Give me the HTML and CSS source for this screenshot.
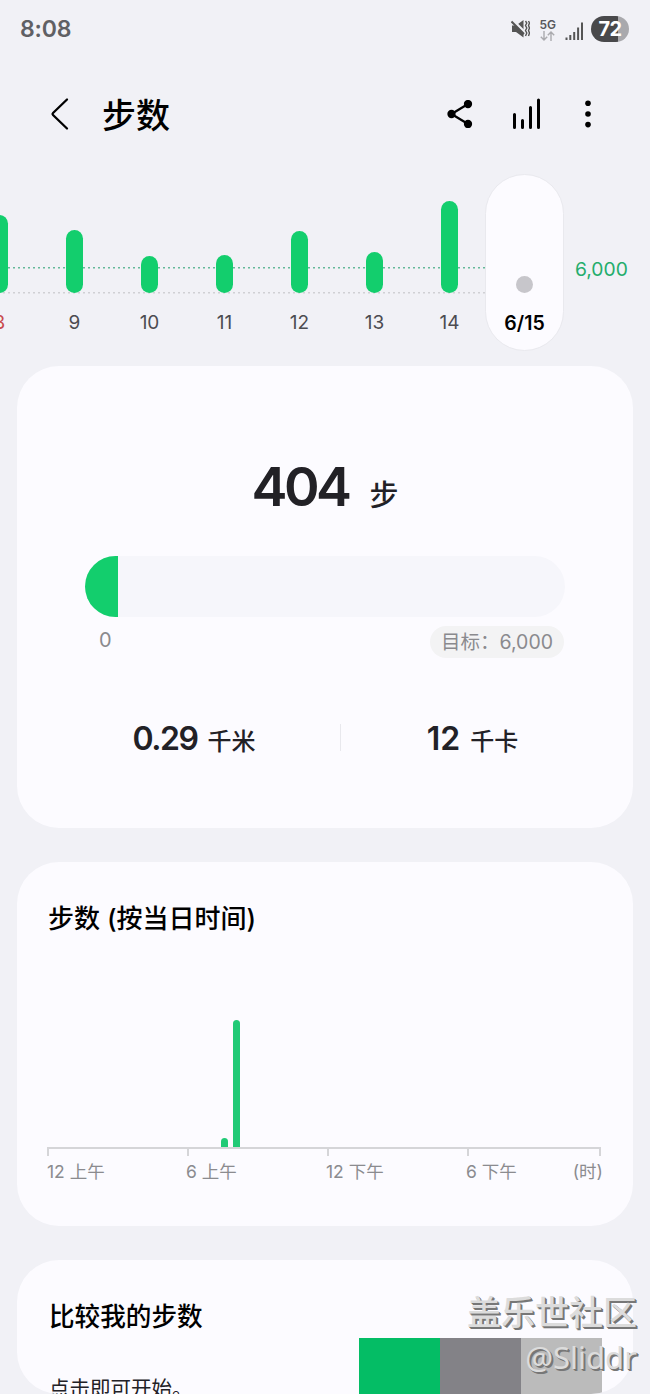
FILE: index.html
```html
<!DOCTYPE html>
<html lang="zh-CN">
<head>
    <meta charset="UTF-8">
    <title>步数</title>
    <link rel="stylesheet" href="styles.css">
</head>
<body>
    <div class="status-bar">
        <span class="clock">8:08</span>
        <div class="status-icons">
            <svg class="mute-icon" width="19" height="18" viewBox="0 0 19 18" fill="none">
                <path d="M1 5.500h4L12.500 0v17.500L5 12H1z" fill="#555"/>
                <path d="M1.500 0L14 12.500" stroke="#f1f1f6" stroke-width="2.600"/>
                <path d="M.5 1.500L13 14" stroke="#555" stroke-width="2"/>
                <path d="M14.500 1l1.300 2-1.300 2.500 1.300 2.500-1.300 2.500 1.300 2.500-1.300 3M17.500 1l1 2-1 2.500 1 2.500-1 2.500 1 2.500-1 3" stroke="#555" stroke-width="1.400"/>
            </svg>
            <div class="network">
                <span>5G</span>
                <svg width="15" height="10" viewBox="0 0 15 10" fill="none" stroke="#aaaaae" stroke-width="1.4">
                    <path d="M4 0v9M.8 5.700L4 9l3.200-3.300M11 10V1M7.800 4.300L11 1l3.200 3.300"/>
                </svg>
            </div>
            <svg class="signal-icon" width="19" height="18" viewBox="0 0 19 18" stroke="#555" stroke-width="2">
                <path d="M1.500 18v-2.500M5.300 18v-5M9.200 18V10M13.100 18V5.500M17 18V0.500"/>
            </svg>
            <div class="battery">72</div>
        </div>
    </div>

    <div class="header">
        <svg class="back" width="20" height="34" viewBox="0 0 20 34" fill="none" stroke="#000" stroke-width="2.3" stroke-linecap="round" stroke-linejoin="round">
            <path d="M17 2.500L3 16Q2 17 3 18L17 31.500"/>
        </svg>
        <h1>步数</h1>
        <svg class="share" width="26" height="28" viewBox="0 0 26 28" stroke="#000" stroke-width="2.300">
            <path d="M21 4L4.500 14L21 24" fill="none"/>
            <circle cx="21" cy="4" r="3"/>
            <circle cx="4.500" cy="14" r="3"/>
            <circle cx="21" cy="24" r="3"/>
        </svg>
        <svg class="trend" width="30" height="32" viewBox="0 0 30 32" stroke="#000" stroke-width="3" stroke-linecap="round">
            <path d="M2.500 16.500V29.500M10.500 22.500v7M18.500 9.500v20M26.500 2v27.500"/>
        </svg>
        <svg class="more" width="8" height="28" viewBox="0 0 8 28">
            <circle cx="4" cy="3.300" r="2.800"/>
            <circle cx="4" cy="14" r="2.800"/>
            <circle cx="4" cy="24.600" r="2.800"/>
        </svg>
    </div>

    <div class="week">
        <div class="days">
            <div class="day sunday"><div class="bar" style="height: 78px"></div><span>8</span></div>
            <div class="day"><div class="bar" style="height: 63px"></div><span>9</span></div>
            <div class="day"><div class="bar" style="height: 37px"></div><span>10</span></div>
            <div class="day"><div class="bar" style="height: 38px"></div><span>11</span></div>
            <div class="day"><div class="bar" style="height: 62px"></div><span>12</span></div>
            <div class="day"><div class="bar" style="height: 41px"></div><span>13</span></div>
            <div class="day"><div class="bar" style="height: 92px"></div><span>14</span></div>
        </div>
        <div class="day today"><div class="bar empty"></div><span>6/15</span></div>
        <div class="goal-label">6,000</div>
    </div>

    <div class="card summary">
        <div class="steps"><span class="count">404</span><span class="unit">步</span></div>
        <div class="progress-bar">
            <div class="progress" style="width: 6.8%"></div>
        </div>
        <div class="progress-labels">
            <span class="zero">0</span>
            <span class="target">目标：<span class="num">6,000</span></span>
        </div>
        <div class="stats">
            <div class="stat"><b>0.29</b><span>千米</span></div>
            <div class="stat"><b>12</b><span>千卡</span></div>
        </div>
    </div>

    <div class="card hourly">
        <h2>步数 (按当日时间)</h2>
        <div class="hour-bars">
            <div class="hour-bar half-past-seven" style="height: 9px"></div>
            <div class="hour-bar eight" style="height: 127px"></div>
        </div>
        <div class="axis"><i></i><i></i><i></i><i></i></div>
        <div class="axis-labels">
            <span>12 上午</span><span>6 上午</span><span>12 下午</span><span>6 下午</span><span>(时)</span>
        </div>
    </div>

    <div class="card compare">
        <div class="compare-text">
            <h2>比较我的步数</h2>
            <p>点击即可开始。</p>
        </div>
        <div class="blocks"><i class="green"></i><i class="dark"></i><i class="light"></i></div>
    </div>

    <div class="watermark">
        <div class="community">盖乐世社区</div>
        <div class="author">@Sliddr</div>
    </div>
</body>
</html>
```
FILE: styles.css
```css
* {
    margin: 0;
    padding: 0;
    box-sizing: border-box;
}

body {
    position: relative;
    width: 650px;
    height: 1394px;
    overflow: hidden;
    font-family: Inter, 'Noto Sans CJK SC', sans-serif;
    background: #f1f1f6;
    color: #222126;
}

svg {
    display: block;
    flex: none;
}

.status-bar {
    display: flex;
    justify-content: space-between;
    align-items: center;
    height: 58px;
    padding: 0 21px 0 20px;
}

.clock {
    font-size: 23px;
    font-weight: 600;
    letter-spacing: -0.2px;
    color: #606064;
}

.status-icons {
    display: flex;
    align-items: center;
}

.network {
    display: flex;
    flex-direction: column;
    align-items: center;
    margin: 1px 9px 0 9px;
    font-size: 12px;
    line-height: 12px;
    font-weight: 600;
    color: #58585c;
}

.signal-icon {
    margin: 3px 7px 0 0;
}

.battery {
    width: 38px;
    height: 26px;
    border-radius: 13px;
    background: linear-gradient(90deg, #49494b 72%, #a9a9ad 72%);
    color: #fff;
    font-size: 20px;
    font-weight: 700;
    letter-spacing: -0.5px;
    line-height: 27px;
    text-align: center;
}

.header {
    display: flex;
    align-items: center;
    height: 111px;
    padding: 0 58px 0 50px;
}

.header h1 {
    margin: 5px auto 0 32px;
    font-size: 34px;
    line-height: 44px;
    font-weight: 500;
    color: #000;
}

.share {
    margin-right: -1px;
}

.trend {
    margin: 0 42px 0 40px;
}

.week {
    display: flex;
    height: 197px;
    padding-top: 5px;
}

.days {
    display: flex;
    width: 485px;
    height: 177px;
    /* goal line and base line */
    background:
        repeating-linear-gradient(90deg, transparent 0 3px, #65b999 3px 5px) 0 93px / 100% 1.5px no-repeat,
        repeating-linear-gradient(90deg, transparent 0 3px, #d0d0d4 3px 5px) 0 118px / 100% 1.5px no-repeat;
}

.day {
    display: flex;
    flex: none;
    flex-direction: column;
    justify-content: flex-end;
    align-items: center;
    width: 75px;
    height: 177px;
    padding-bottom: 16px;
    font-size: 19px;
    line-height: 24px;
    color: #4c4c51;
}

.sunday {
    margin-left: -38px;
    color: #c94b4d;
}

.bar {
    width: 17px;
    margin-bottom: 18px;
    border-radius: 9px;
    background: #13ce6d;
}

.today {
    width: 79px;
    border: 1px solid #e9e9ee;
    border-radius: 40px;
    background: #fcfbff;
    font-size: 19.5px;
    font-weight: 600;
    color: #000;
    padding-bottom: 15px;
}

.empty {
    height: 17px;
    background: #c7c6cb;
}

.goal-label {
    padding: 83px 0 0 11px;
    font-size: 19.3px;
    line-height: 24px;
    color: #24ad6c;
}

.card {
    width: 616px;
    margin: 0 0 34px 17px;
    border-radius: 42px;
    background: #fcfbff;
}

.card h2 {
    font-size: 25.6px;
    line-height: 36px;
    font-weight: 500;
    color: #000;
}

.summary {
    height: 462px;
    padding: 85px 68px 0;
}

.steps {
    display: flex;
    justify-content: center;
    align-items: baseline;
    height: 105px;
    line-height: 72px;
}

.count {
    font-size: 54px;
    font-weight: 600;
    letter-spacing: -3.5px;
}

.unit {
    margin-left: 21px;
    font-size: 29px;
    font-weight: 500;
    line-height: 68px;
}

.progress-bar {
    width: 480px;
    height: 61px;
    border-radius: 31px;
    overflow: hidden;
    background: #f6f6fb;
}

.progress {
    height: 100%;
    background: #13ce6d;
}

.progress-labels {
    display: flex;
    justify-content: space-between;
    margin-top: 9px;
    padding: 0 1px 0 14px;
    font-size: 20px;
    line-height: 29px;
    color: #8a8a8e;
}

.target {
    height: 32px;
    padding: 2px 11px;
    border-radius: 16px;
    background: #f3f3f4;
    font-size: 19.5px;
}

.stats {
    display: flex;
    margin-top: 60px;
}

.stat {
    display: flex;
    justify-content: center;
    align-items: baseline;
    width: 255px;
    line-height: 42px;
    padding-right: 37px;
}

.stat + .stat {
    width: 225px;
    padding: 0 0 0 40px;
    background: linear-gradient(#e8e8ed, #e8e8ed) 0 6px / 1px 27px no-repeat;
}

.stat b {
    font-size: 32px;
    font-weight: 600;
}

.stat:first-child b {
    letter-spacing: -1.5px;
}

.stat span {
    margin-left: 10px;
    font-size: 24px;
    font-weight: 500;
}

.hourly {
    height: 364px;
    padding: 39px 32px 0 30px;
}

.hourly h2 {
    padding-left: 1px;
    font-size: 26px;
}

.hour-bars {
    display: grid;
    grid-template-columns: repeat(47, 11.6px);
    align-items: end;
    height: 210px;
}

/* one column for each half hour */
.hour-bar {
    width: 7px;
    border-radius: 4px 4px 0 0;
    background: #21ca76;
}

.half-past-seven {
    grid-column: 16;
}

.eight {
    grid-column: 17;
}

.axis {
    display: grid;
    grid-template-columns: 140px 140px 140px 1fr;
    height: 9px;
    border-top: 2px solid #d5d5d8;
    border-right: 2px solid #d5d5d8;
}

.axis i {
    border-left: 2px solid #d5d5d8;
}

.axis-labels {
    display: grid;
    grid-template-columns: 139px 140px 140px 1fr auto;
    margin: 3px -2px 0 0;
    font-size: 17.5px;
    line-height: 26px;
    color: #8b8b8f;
}

.compare {
    display: flex;
    justify-content: space-between;
    height: 134px;
    margin-bottom: 0;
    padding: 39px 31px 0 32px;
    overflow: hidden;
}

.compare-text p {
    margin-top: 38px;
    font-size: 20.5px;
    line-height: 32px;
    white-space: nowrap;
}

.blocks {
    display: flex;
    margin-top: 39px;
}

.blocks i {
    width: 81px;
    height: 60px;
}

.green {
    background: #04bd65;
}

.dark {
    background: #838287;
}

.light {
    background: #bbb;
}

.watermark {
    position: absolute;
    right: 13px;
    top: 1290px;
    text-align: right;
    color: #dcdcdc;
    text-shadow: 1px 1px 0 #777, 2px 2px 0 #777;
}

.community {
    font-size: 34px;
    line-height: 46px;
    font-weight: 500;
}

.author {
    font-family: 'Noto Sans', sans-serif;
    font-size: 31px;
    line-height: 42px;
}
```
